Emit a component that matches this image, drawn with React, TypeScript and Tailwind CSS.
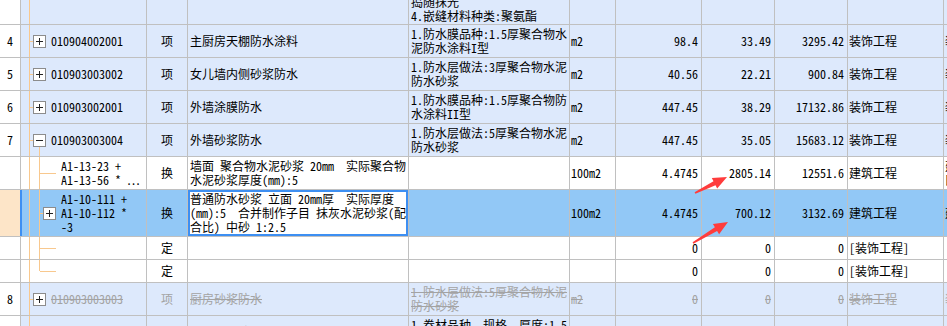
import type { ReactNode } from "react";

const ORANGE = "bg-[#f8c88e]";

function Box({ sign }: { sign: "+" | "-" }) {
  return (
    <svg width="13" height="13" className="shrink-0 block">
      <rect x="0.5" y="0.5" width="12" height="12" fill="#fff" stroke="#8c8c8c" />
      <line x1="3" y1="6.5" x2="10" y2="6.5" stroke="#222" />
      {sign === "+" && <line x1="6.5" y1="3" x2="6.5" y2="10" stroke="#222" />}
    </svg>
  );
}

function Lines({ lines, strike }: { lines: string[]; strike?: boolean }) {
  return (
    <div className="flex flex-col">
      {lines.map((l, i) => (
        <span key={i} className={`whitespace-pre leading-[14px] ${strike ? "line-through" : ""}`}>
          {l}
        </span>
      ))}
    </div>
  );
}

// top level tree column: guide at x=29, stub, box, code
function ItemTree({ code, sign = "+", open, strike, blank }: { code?: string; sign?: "+" | "-"; open?: boolean; strike?: boolean; blank?: boolean }) {
  return (
    <div className="flex h-full">
      <div className="w-[8px] shrink-0" />
      <div className={`w-px shrink-0 ${ORANGE}`} />
      {!blank && (
        <>
          <div className="flex items-center">
            <div className={`w-[3px] h-px ${ORANGE}`} />
          </div>
          <div className="flex flex-col items-center w-[13px]">
            <div className="flex-1" />
            <Box sign={sign} />
            <div className={`flex-1 w-px ${open ? ORANGE : ""}`} />
          </div>
          <span className={`ml-[5px] self-center whitespace-pre ${strike ? "line-through" : ""}`}>{code}</span>
        </>
      )}
    </div>
  );
}

function ChildTree({ lines, last, box, marker }: { lines?: string[]; last?: boolean; box?: boolean; marker?: boolean }) {
  return (
    <div className="flex h-full">
      {marker ? (
        <>
          <div className="w-px shrink-0 bg-[#3d8ff2]" />
          <div className="w-[7px] shrink-0" />
        </>
      ) : (
        <div className="w-[8px] shrink-0" />
      )}
      <div className={`w-px shrink-0 ${ORANGE}`} />
      <div className="w-[9px] shrink-0" />
      <div className="w-px shrink-0 flex flex-col">
        <div className={`flex-1 ${ORANGE}`} />
        <div className={`flex-1 ${last ? "" : ORANGE}`} />
      </div>
      <div className="flex items-center">
        <div className={`${box ? "w-[3px]" : "w-[16px]"} h-px ${ORANGE}`} />
      </div>
      {box && (
        <div className="flex items-center">
          <Box sign="+" />
        </div>
      )}
      {lines && (
        <div className="ml-[5px] self-center">
          <Lines lines={lines} />
        </div>
      )}
    </div>
  );
}

type RowProps = {
  h: string;
  bg: string;
  no?: string;
  col0?: string;
  tree: ReactNode;
  type?: string;
  name?: ReactNode;
  feat?: string[];
  featBottom?: boolean;
  unit?: string;
  qty?: string;
  price?: string;
  total?: string;
  major?: string;
  extra?: string[];
  strike?: boolean;
};

function Row(p: RowProps) {
  const s = p.strike ? "text-[#a3a3a3]" : "text-black";
  const lt = p.strike ? "line-through" : "";
  return (
    <div className={`flex shrink-0 border-b border-[#c0c0c0] ${p.h} ${p.bg} ${s}`}>
      <div className={`w-[21px] shrink-0 border-r flex items-center justify-center text-black ${p.col0 ?? "bg-white border-[#c0c0c0]"}`}>
        {p.no}
      </div>
      <div className="w-[126px] shrink-0 border-r border-[#c0c0c0] overflow-hidden">{p.tree}</div>
      <div className="w-[41px] shrink-0 border-r border-[#c0c0c0] flex items-center justify-center">{p.type}</div>
      <div className="w-[221px] shrink-0 border-r border-[#c0c0c0] flex items-center pl-[2px] overflow-hidden">
        {typeof p.name === "string" ? <span className={`whitespace-pre ${lt}`}>{p.name}</span> : p.name}
      </div>
      <div className={`w-[161px] shrink-0 border-r border-[#c0c0c0] flex pl-[2px] overflow-hidden ${p.featBottom ? "items-end pb-[1px]" : "items-center"}`}>
        {p.feat && <Lines lines={p.feat} strike={p.strike} />}
      </div>
      <div className="w-[46px] shrink-0 border-r border-[#c0c0c0] flex items-center pl-px">
        <span className={lt}>{p.unit}</span>
      </div>
      <div className="w-[86px] shrink-0 border-r border-[#c0c0c0] flex items-center justify-end pr-[3px]">
        <span className={lt}>{p.qty}</span>
      </div>
      <div className="w-[73px] shrink-0 border-r border-[#c0c0c0] flex items-center justify-end pr-[3px]">
        <span className={lt}>{p.price}</span>
      </div>
      <div className="w-[73px] shrink-0 border-r border-[#c0c0c0] flex items-center justify-end pr-[3px]">
        <span className={lt}>{p.total}</span>
      </div>
      <div className="w-[96px] shrink-0 border-r border-[#c0c0c0] flex items-center pl-px">
        <span className={`whitespace-pre ${lt}`}>{p.major}</span>
      </div>
      <div className="flex-1 flex items-center pl-px overflow-hidden">
        {p.extra && <Lines lines={p.extra} />}
      </div>
    </div>
  );
}

function arrowPoints(x1: number, y1: number, x2: number, y2: number) {
  const len = Math.hypot(x2 - x1, y2 - y1);
  const ux = (x2 - x1) / len;
  const uy = (y2 - y1) / len;
  const nx = -uy;
  const ny = ux;
  const head = 14;
  const bx = x2 - ux * head;
  const by = y2 - uy * head;
  const pts: [number, number][] = [
    [x2, y2],
    [bx + nx * 6, by + ny * 6],
    [bx + nx * 2.2, by + ny * 2.2],
    [x1 + nx * 0.8, y1 + ny * 0.8],
    [x1 - nx * 0.8, y1 - ny * 0.8],
    [bx - nx * 2.2, by - ny * 2.2],
    [bx - nx * 6, by - ny * 6],
  ];
  return pts.map(([x, y]) => `${x.toFixed(1)},${y.toFixed(1)}`).join(" ");
}

const LIGHT = "bg-[#dde9fc]";
const SEL = "bg-[#92c8f6]";

export default function App() {
  return (
    <div className="relative w-[947px] h-[326px] overflow-hidden bg-white text-[12px] leading-[14px] font-['Noto_Sans_Mono_CJK_SC','Noto_Sans_CJK_SC',monospace]">
      <div className="flex flex-col">
        <Row
          h="h-[25px]"
          bg={LIGHT}
          tree={<ItemTree blank />}
          feat={["捣随抹光", "4.嵌缝材料种类:聚氨酯"]}
          featBottom
        />
        <Row
          h="h-[33px]"
          bg={LIGHT}
          no="4"
          tree={<ItemTree code="010904002001" />}
          type="项"
          name="主厨房天棚防水涂料"
          feat={["1.防水膜品种:1.5厚聚合物水", "泥防水涂料I型"]}
          unit="m2"
          qty="98.4"
          price="33.49"
          total="3295.42"
          major="装饰工程"
          extra={["装"]}
        />
        <Row
          h="h-[33px]"
          bg={LIGHT}
          no="5"
          tree={<ItemTree code="010903003002" />}
          type="项"
          name="女儿墙内侧砂浆防水"
          feat={["1.防水层做法:3厚聚合物水泥", "防水砂浆"]}
          unit="m2"
          qty="40.56"
          price="22.21"
          total="900.84"
          major="装饰工程"
          extra={["装"]}
        />
        <Row
          h="h-[33px]"
          bg={LIGHT}
          no="6"
          tree={<ItemTree code="010903002001" />}
          type="项"
          name="外墙涂膜防水"
          feat={["1.防水膜品种:1.5厚聚合物防", "水涂料II型"]}
          unit="m2"
          qty="447.45"
          price="38.29"
          total="17132.86"
          major="装饰工程"
          extra={["装"]}
        />
        <Row
          h="h-[33px]"
          bg={LIGHT}
          no="7"
          tree={<ItemTree code="010903003004" sign="-" open />}
          type="项"
          name="外墙砂浆防水"
          feat={["1.防水层做法:5厚聚合物水泥", "防水砂浆"]}
          unit="m2"
          qty="447.45"
          price="35.05"
          total="15683.12"
          major="装饰工程"
          extra={["装"]}
        />
        <Row
          h="h-[33px]"
          bg="bg-white"
          tree={<ChildTree lines={["A1-13-23 +", "A1-13-56 * ⋯"]} />}
          type="换"
          name={<Lines lines={["墙面 聚合物水泥砂浆 20mm  实际聚合物", "水泥砂浆厚度(mm):5"]} />}
          unit="100m2"
          qty="4.4745"
          price="2805.14"
          total="12551.6"
          major="建筑工程"
          extra={["建", "口"]}
        />
        <Row
          h="h-[47px]"
          bg={SEL}
          col0="bg-[#fde5c8] border-[#3d8ff2]"
          tree={<ChildTree lines={["A1-10-111 +", "A1-10-112 *", "-3"]} box marker />}
          type="换"
          name={
            <div className="h-full -ml-[2px] w-[calc(100%+2px)] border-2 border-[#3d8ff2] bg-white flex flex-col justify-center">
              <Lines lines={["普通防水砂浆 立面 20mm厚  实际厚度", "(mm):5  合并制作子目 抹灰水泥砂浆(配", "合比) 中砂 1:2.5"]} />
            </div>
          }
          unit="100m2"
          qty="4.4745"
          price="700.12"
          total="3132.69"
          major="建筑工程"
          extra={["建"]}
        />
        <Row
          h="h-[23px]"
          bg="bg-white"
          tree={<ChildTree />}
          type="定"
          qty="0"
          price="0"
          total="0"
          major="[装饰工程]"
        />
        <Row
          h="h-[23px]"
          bg="bg-white"
          tree={<ChildTree last />}
          type="定"
          qty="0"
          price="0"
          total="0"
          major="[装饰工程]"
        />
        <Row
          h="h-[33px]"
          bg={LIGHT}
          no="8"
          strike
          tree={<ItemTree code="010903003003" strike />}
          type="项"
          name="厨房砂浆防水"
          feat={["1.防水层做法:5厚聚合物水泥", "防水砂浆"]}
          unit="m2"
          qty="0"
          price="0"
          total="0"
          major="装饰工程"
          extra={["装"]}
        />
        <Row
          h="h-[33px]"
          bg={LIGHT}
          no="9"
          tree={<ItemTree code="010902001001" />}
          type="项"
          name="屋面卷材防水"
          feat={["1.卷材品种、规格、厚度:1.5", "厚SBS改性沥青防水卷材"]}
          unit="m2"
          qty="0"
          price="0"
          total="0"
          major="装饰工程"
          extra={["装"]}
        />
      </div>
      <svg className="absolute inset-0 pointer-events-none" width="947" height="326">
        <polygon points={arrowPoints(695, 193, 727, 177)} fill="#ff3c3c" />
        <polygon points={arrowPoints(693, 243, 728, 222)} fill="#ff3c3c" />
      </svg>
    </div>
  );
}
